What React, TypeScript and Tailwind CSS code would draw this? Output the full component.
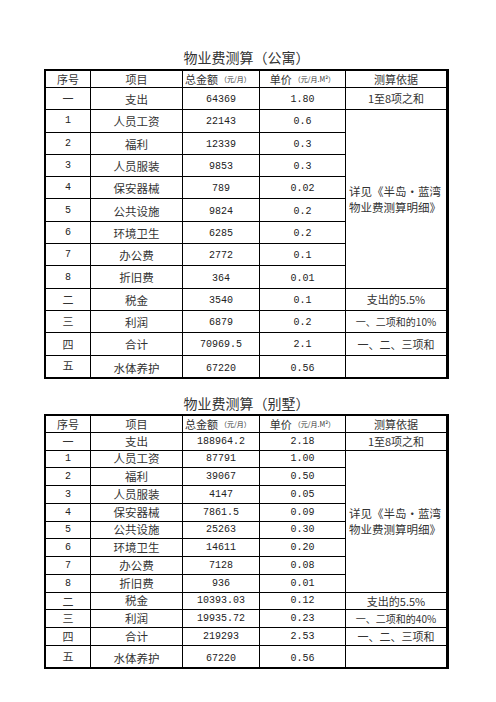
import React from 'react';

type Row = {
  seq: string;
  item: string;
  amount: string;
  price: string;
  basis?: string;
  basisSize?: string;
};

const apartment: Row[] = [
  { seq: '一', item: '支出', amount: '64369', price: '1.80', basis: '1至8项之和' },
  { seq: '1', item: '人员工资', amount: '22143', price: '0.6' },
  { seq: '2', item: '福利', amount: '12339', price: '0.3' },
  { seq: '3', item: '人员服装', amount: '9853', price: '0.3' },
  { seq: '4', item: '保安器械', amount: '789', price: '0.02' },
  { seq: '5', item: '公共设施', amount: '9824', price: '0.2' },
  { seq: '6', item: '环境卫生', amount: '6285', price: '0.2' },
  { seq: '7', item: '办公费', amount: '2772', price: '0.1' },
  { seq: '8', item: '折旧费', amount: '364', price: '0.01' },
  { seq: '二', item: '税金', amount: '3540', price: '0.1', basis: '支出的5.5%' },
  { seq: '三', item: '利润', amount: '6879', price: '0.2', basis: '一、二项和的10%', basisSize: 'text-[10px]' },
  { seq: '四', item: '合计', amount: '70969.5', price: '2.1', basis: '一、二、三项和' },
  { seq: '五', item: '水体养护', amount: '67220', price: '0.56', basis: '' },
];

const villa: Row[] = [
  { seq: '一', item: '支出', amount: '188964.2', price: '2.18', basis: '1至8项之和' },
  { seq: '1', item: '人员工资', amount: '87791', price: '1.00' },
  { seq: '2', item: '福利', amount: '39067', price: '0.50' },
  { seq: '3', item: '人员服装', amount: '4147', price: '0.05' },
  { seq: '4', item: '保安器械', amount: '7861.5', price: '0.09' },
  { seq: '5', item: '公共设施', amount: '25263', price: '0.30' },
  { seq: '6', item: '环境卫生', amount: '14611', price: '0.20' },
  { seq: '7', item: '办公费', amount: '7128', price: '0.08' },
  { seq: '8', item: '折旧费', amount: '936', price: '0.01' },
  { seq: '二', item: '税金', amount: '10393.03', price: '0.12', basis: '支出的5.5%' },
  { seq: '三', item: '利润', amount: '19935.72', price: '0.23', basis: '一、二项和的40%', basisSize: 'text-[10px]' },
  { seq: '四', item: '合计', amount: '219293', price: '2.53', basis: '一、二、三项和' },
  { seq: '五', item: '水体养护', amount: '67220', price: '0.56', basis: '' },
];

const cell = 'bg-white flex items-center justify-center whitespace-nowrap';
const num = "font-['Liberation_Mono',monospace] text-[10px] text-[#222]";

const SheetTable = ({ rows, rowsClass, shift }: { rows: Row[]; rowsClass: string; shift: string }) => (
  <div
    className={`w-[405px] ml-[44px] grid grid-cols-[44px_91px_76px_85px_100px] gap-px bg-black border-t-2 border-l-2 border-b-2 border-r-[3px] border-black ${rowsClass}`}
  >
    {/* header */}
    <div className={`${cell} text-[11px]`}>序号</div>
    <div className={`${cell} text-[11px]`}>项目</div>
    <div className={`${cell} text-[11px] justify-start pl-[2px]`}>
      总金额<span className="text-[7px] ml-[2px]">（元/月）</span>
    </div>
    <div className={`${cell} text-[11px]`}>
      单价<span className="text-[7px] ml-[2px]">（元/月.M²）</span>
    </div>
    <div className={`${cell} text-[11px]`}>测算依据</div>

    {rows.map((r, i) => {
      const last = i === rows.length - 1;
      const pad = last ? 'pt-[5px]' : shift;
      return (
        <React.Fragment key={i}>
          <div className={`${cell} text-[11px] ${last ? 'pb-[1px]' : ''}`}>
            {/^\d$/.test(r.seq) ? <span className={num}>{r.seq}</span> : r.seq}
          </div>
          <div className={`${cell} text-[11.5px] ${pad}`}>{r.item}</div>
          <div className={`${cell} ${num} ${pad}`}>{r.amount}</div>
          <div className={`${cell} ${num} ${pad}`}>{r.price}</div>
          {r.basis !== undefined && (
            <div className={`${cell} ${r.basisSize ?? 'text-[11px]'}`}>{r.basis}</div>
          )}
          {i === 1 && (
            <div className="bg-white row-span-8 flex items-center pl-[3px] text-[11.5px] leading-[16px]">
              <div>
                详见《半岛•蓝湾
                <br />
                物业费测算明细》
              </div>
            </div>
          )}
        </React.Fragment>
      );
    })}
  </div>
);

export default function App() {
  return (
    <div className="w-[496px] h-[702px] bg-white text-[#333] font-['Noto_Sans_CJK_SC',sans-serif] pt-[45px]">
      <div className="w-[405px] ml-[44px] h-[24px] leading-[24px] text-center text-[14px]">
        物业费测算（公寓）
      </div>
      <SheetTable rows={apartment} rowsClass="grid-rows-[16px_repeat(13,21.3px)]" shift="pt-[2px]" />

      <div className="w-[405px] ml-[44px] mt-[13px] h-[22px] leading-[22px] text-center text-[14px]">
        物业费测算（别墅）
      </div>
      <SheetTable rows={villa} rowsClass="grid-rows-[16px_repeat(12,16.75px)_21px]" shift="" />
    </div>
  );
}
